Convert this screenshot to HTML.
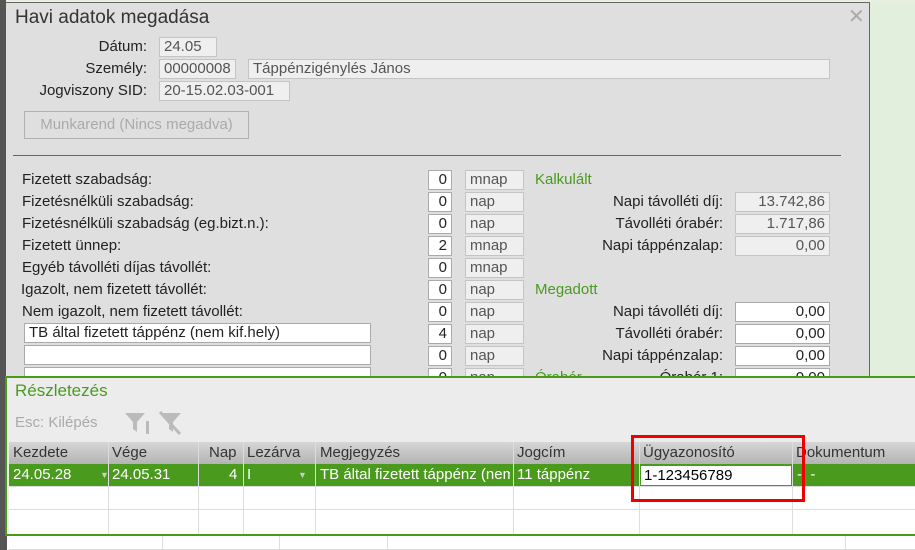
<!DOCTYPE html>
<html><head><meta charset="utf-8"><style>
*{box-sizing:border-box;margin:0;padding:0}
body{width:915px;height:550px;overflow:hidden;background:#e2efdc;font-family:"Liberation Sans",sans-serif;font-size:15px;color:#222;position:relative}
.a{position:absolute;white-space:nowrap}
.box{position:absolute;border:1px solid #c4c4c4;background:#efefef;color:#555;padding:0 4px;line-height:17px;height:20px}
.wb{background:#fff;border-color:#aaa;color:#222}
.r{text-align:right}
.g{color:#4a9a1e}
.lab{position:absolute;left:22px}
.rl{position:absolute;right:192px;text-align:right}
</style></head><body>
<div class="a" style="left:0;top:0;width:915px;height:4px;background:#e6efe0"></div>
<div class="a" style="left:0;top:0;width:6px;height:380px;background:#555"></div>
<div class="a" style="left:6px;top:2px;width:864px;height:378px;background:#dfdfdf;border:1px solid #666;border-left:none"></div>
<div class="a" style="left:15px;top:7px;font-size:19px;color:#333">Havi adatok megadása</div>
<div class="a" style="left:848px;top:4px;font-size:20px;color:#aaa">✕</div>
<div class="a r" style="left:60px;width:87px;top:38px">Dátum:</div>
<div class="box" style="left:159px;top:37px;width:58px">24.05</div>
<div class="a r" style="left:40px;width:107px;top:60px">Személy:</div>
<div class="box" style="left:159px;top:59px;width:77px">00000008</div>
<div class="box" style="left:248px;top:59px;width:582px">Táppénzigénylés János</div>
<div class="a r" style="left:20px;width:127px;top:82px">Jogviszony SID:</div>
<div class="box" style="left:159px;top:81px;width:131px">20-15.02.03-001</div>
<div class="a" style="left:24px;top:111px;width:225px;height:28px;border:1px solid #b0b0b0;color:#aaa;text-align:center;line-height:26px">Munkarend (Nincs megadva)</div>
<div class="a" style="left:13px;top:155px;width:828px;height:1px;background:#666"></div>

<div class="lab" style="top:171px">Fizetett szabadság:</div>
<div class="lab" style="top:193px">Fizetésnélküli szabadság:</div>
<div class="lab" style="top:215px">Fizetésnélküli szabadság (eg.bizt.n.):</div>
<div class="lab" style="top:237px">Fizetett ünnep:</div>
<div class="lab" style="top:259px">Egyéb távolléti díjas távollét:</div>
<div class="lab" style="top:281px;left:21px">Igazolt, nem fizetett távollét:</div>
<div class="lab" style="top:303px">Nem igazolt, nem fizetett távollét:</div>
<div class="box wb" style="left:24px;top:323px;width:347px">TB által fizetett táppénz (nem kif.hely)</div>
<div class="box wb" style="left:24px;top:345px;width:347px"></div>
<div class="box wb" style="left:24px;top:367px;width:347px"></div>

<div class="box wb r" style="left:428px;top:170px;width:24px">0</div><div class="box" style="left:465px;top:170px;width:59px">mnap</div>
<div class="box wb r" style="left:428px;top:192px;width:24px">0</div><div class="box" style="left:465px;top:192px;width:59px">nap</div>
<div class="box wb r" style="left:428px;top:214px;width:24px">0</div><div class="box" style="left:465px;top:214px;width:59px">nap</div>
<div class="box wb r" style="left:428px;top:236px;width:24px">2</div><div class="box" style="left:465px;top:236px;width:59px">mnap</div>
<div class="box wb r" style="left:428px;top:258px;width:24px">0</div><div class="box" style="left:465px;top:258px;width:59px">mnap</div>
<div class="box wb r" style="left:428px;top:280px;width:24px">0</div><div class="box" style="left:465px;top:280px;width:59px">nap</div>
<div class="box wb r" style="left:428px;top:302px;width:24px">0</div><div class="box" style="left:465px;top:302px;width:59px">nap</div>
<div class="box wb r" style="left:428px;top:324px;width:24px">4</div><div class="box" style="left:465px;top:324px;width:59px">nap</div>
<div class="box wb r" style="left:428px;top:346px;width:24px">0</div><div class="box" style="left:465px;top:346px;width:59px">nap</div>
<div class="box wb r" style="left:428px;top:368px;width:24px">0</div><div class="box" style="left:465px;top:368px;width:59px">nap</div>

<div class="a g" style="left:535px;top:171px">Kalkulált</div>
<div class="a g" style="left:535px;top:281px">Megadott</div>
<div class="a g" style="left:535px;top:369px">Órabér</div>
<div class="rl" style="top:193px">Napi távolléti díj:</div><div class="box r" style="left:735px;top:192px;width:95px">13.742,86</div>
<div class="rl" style="top:215px">Távolléti órabér:</div><div class="box r" style="left:735px;top:214px;width:95px">1.717,86</div>
<div class="rl" style="top:237px">Napi táppénzalap:</div><div class="box r" style="left:735px;top:236px;width:95px">0,00</div>
<div class="rl" style="top:303px">Napi távolléti díj:</div><div class="box wb r" style="left:735px;top:302px;width:95px">0,00</div>
<div class="rl" style="top:325px">Távolléti órabér:</div><div class="box wb r" style="left:735px;top:324px;width:95px">0,00</div>
<div class="rl" style="top:347px">Napi táppénzalap:</div><div class="box wb r" style="left:735px;top:346px;width:95px">0,00</div>
<div class="rl" style="top:369px">Órabér 1:</div><div class="box wb r" style="left:735px;top:368px;width:95px">0,00</div>

<div class="a" style="left:0;top:376px;width:915px;height:174px;background:#fff"></div>
<div class="a" style="left:0;top:376px;width:7px;height:174px;background:#555"></div>
<div class="a" style="left:5px;top:376px;width:910px;height:160px;background:#ececec;border-top:2px solid #4a9a1e;border-left:2px solid #4a9a1e;border-bottom:2px solid #4a9a1e"></div>
<div class="a g" style="left:15px;top:381px;font-size:17px">Részletezés</div>
<div class="a" style="left:15px;top:414px;color:#aaa;font-size:15px">Esc: Kilépés</div>
<svg class="a" style="left:124px;top:411px" width="60" height="25"><path d="M1 2h20l-8 9v10l-4-3v-7z" fill="#bbb"/><rect x="22" y="10" width="3" height="13" fill="#bbb"/><path d="M37 2h20l-8 9v10l-4-3v-7z" fill="#bbb"/><path d="M36 1l20 22" stroke="#bbb" stroke-width="3"/></svg>
<div class="a" style="left:9px;top:442px;width:906px;height:22px;background:linear-gradient(#d6d6d6,#b4b4b4)"></div>
<div class="a" style="left:9px;top:464px;width:906px;height:23px;background:#4a9a1e"></div>
<div class="a" style="left:9px;top:487px;width:906px;height:47px;background:#fff"></div>
<div class="a" style="left:9px;top:509px;width:906px;height:1px;background:#ddd"></div>
<div class="a" style="left:9px;top:486px;width:906px;height:1px;background:#ddd"></div>
<div class="a" style="left:108px;top:442px;width:1px;height:92px;background:#ddd"></div>
<div class="a" style="left:198px;top:442px;width:1px;height:92px;background:#ddd"></div>
<div class="a" style="left:243px;top:442px;width:1px;height:92px;background:#ddd"></div>
<div class="a" style="left:315px;top:442px;width:1px;height:92px;background:#ddd"></div>
<div class="a" style="left:513px;top:442px;width:1px;height:92px;background:#ddd"></div>
<div class="a" style="left:639px;top:442px;width:1px;height:92px;background:#ddd"></div>
<div class="a" style="left:792px;top:442px;width:1px;height:92px;background:#ddd"></div>
<div class="a" style="top:444px;left:13px;color:#333">Kezdete</div>
<div class="a" style="top:444px;left:112px;color:#333">Vége</div>
<div class="a" style="top:444px;left:209px;color:#333">Nap</div>
<div class="a" style="top:444px;left:247px;color:#333">Lezárva</div>
<div class="a" style="top:444px;left:320px;color:#333">Megjegyzés</div>
<div class="a" style="top:444px;left:517px;color:#333">Jogcím</div>
<div class="a" style="top:444px;left:643px;color:#333">Ügyazonosító</div>
<div class="a" style="top:444px;left:796px;color:#333">Dokumentum</div>
<div class="a" style="top:466px;left:13px;color:#fff">24.05.28</div>
<div class="a" style="top:470px;left:100px;color:#ccc;font-size:9px">▼</div>
<div class="a" style="top:466px;left:112px;color:#fff">24.05.31</div>
<div class="a" style="top:466px;left:229px;color:#fff">4</div>
<div class="a" style="top:466px;left:247px;color:#fff">I</div>
<div class="a" style="top:470px;left:298px;color:#ccc;font-size:9px">▼</div>
<div class="a" style="top:466px;left:320px;color:#fff;width:190px;overflow:hidden">TB által fizetett táppénz (nem</div>
<div class="a" style="top:466px;left:517px;color:#fff">11 táppénz</div>
<div class="a" style="top:465px;left:640px;width:152px;height:21px;background:#fff;border:1px solid #4a9a1e;padding-left:3px;line-height:19px;color:#000">1-123456789</div>
<div class="a" style="top:466px;left:797px;color:#fff">-&nbsp;&nbsp;-</div>
<div class="a" style="left:631px;top:435px;width:174px;height:67px;border:3px solid #e00"></div>
<div class="a" style="left:9px;top:536px;width:906px;height:14px;border-bottom:1px solid #ddd"></div>
<div class="a" style="left:162px;top:536px;width:1px;height:14px;background:#ddd"></div>
<div class="a" style="left:279px;top:536px;width:1px;height:14px;background:#ddd"></div>
<div class="a" style="left:387px;top:536px;width:1px;height:14px;background:#ddd"></div>
<div class="a" style="left:845px;top:536px;width:1px;height:14px;background:#ddd"></div>
</body></html>
